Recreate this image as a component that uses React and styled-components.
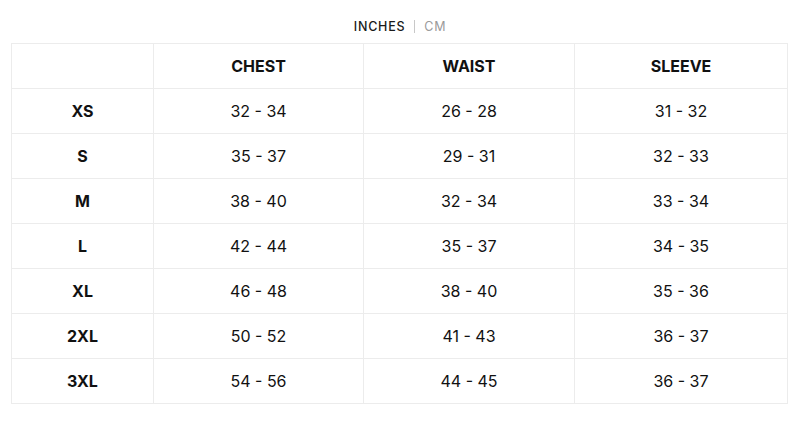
import React from 'react';
import styled, { createGlobalStyle } from 'styled-components';

const GlobalStyle = createGlobalStyle`
	body {
		margin: 0;
		background: #fff;
		font-family: Inter, "Liberation Sans", sans-serif;
		color: #111;
	}
`;

const Page = styled.div`
	padding: 16px 11px 0 11px;
	width: 800px;
	box-sizing: border-box;
`;

const UnitToggle = styled.div`
	display: flex;
	justify-content: center;
	align-items: center;
	gap: 9px;
	font-size: 12.5px;
	letter-spacing: 0.06em;
	height: 20px;
	margin-bottom: 7px;
`;

const Unit = styled.span`
	color: ${(props) => (props.active ? '#1a1a1a' : '#9a9a9a')};
	font-weight: ${(props) => (props.active ? 500 : 400)};
`;

const Divider = styled.span`
	width: 1px;
	height: 13px;
	background: #c8c8c8;
`;

const Table = styled.table`
	width: 776px;
	border-collapse: collapse;
	table-layout: fixed;
	border: 1px solid #ececec;
`;

const Cell = styled.td`
	border: 1px solid #ececec;
	height: 44px;
	padding: 0;
	text-align: center;
	font-size: 16px;
	font-weight: ${(props) => (props.bold ? 700 : 400)};
	color: #111;
`;

const rows = [
	['XS', '32 - 34', '26 - 28', '31 - 32'],
	['S', '35 - 37', '29 - 31', '32 - 33'],
	['M', '38 - 40', '32 - 34', '33 - 34'],
	['L', '42 - 44', '35 - 37', '34 - 35'],
	['XL', '46 - 48', '38 - 40', '35 - 36'],
	['2XL', '50 - 52', '41 - 43', '36 - 37'],
	['3XL', '54 - 56', '44 - 45', '36 - 37'],
];

const App = () => (
	<Page>
		<GlobalStyle />
		<UnitToggle>
			<Unit active>INCHES</Unit>
			<Divider />
			<Unit>CM</Unit>
		</UnitToggle>
		<Table>
			<colgroup>
				<col style={{ width: 142 }} />
				<col style={{ width: 210 }} />
				<col style={{ width: 211 }} />
				<col style={{ width: 213 }} />
			</colgroup>
			<thead>
				<tr>
					<Cell as="th" />
					<Cell as="th" bold>CHEST</Cell>
					<Cell as="th" bold>WAIST</Cell>
					<Cell as="th" bold>SLEEVE</Cell>
				</tr>
			</thead>
			<tbody>
				{rows.map((r) => (
					<tr key={r[0]}>
						<Cell bold>{r[0]}</Cell>
						<Cell>{r[1]}</Cell>
						<Cell>{r[2]}</Cell>
						<Cell>{r[3]}</Cell>
					</tr>
				))}
			</tbody>
		</Table>
	</Page>
);

export default App;
